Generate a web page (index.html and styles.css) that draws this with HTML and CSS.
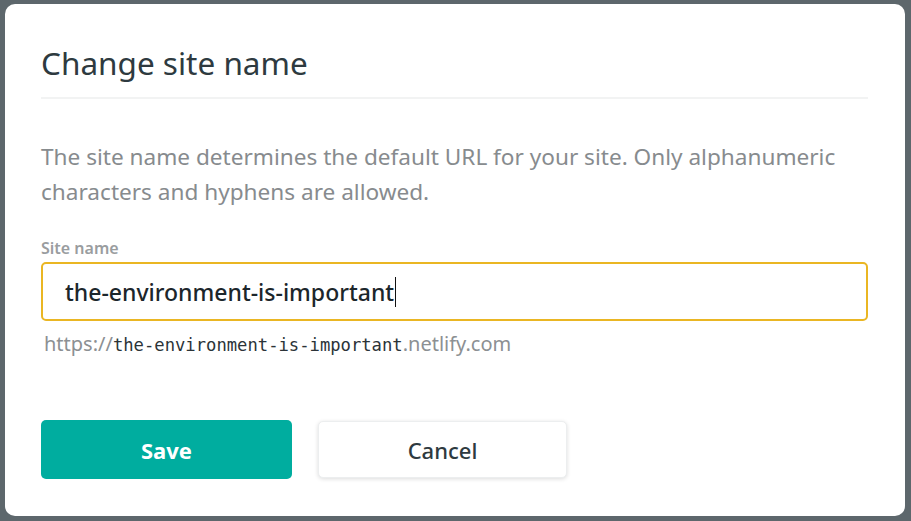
FILE: index.html
```html
<!DOCTYPE html>
<html>
<head>
<meta charset="utf-8">
<link rel="stylesheet" href="styles.css">
</head>
<body>
<div class="modal">
  <h1 class="title">Change site name</h1>
  <div class="divider"></div>
  <p class="desc">The site name determines the default URL for your site. Only alphanumeric characters and hyphens are allowed.</p>
  <label class="label">Site name</label>
  <div class="input"><span class="value">the-environment-is-important</span><span class="caret"></span></div>
  <div class="url">https://<span class="mono">the-environment-is-important</span>.netlify.com</div>
  <div class="actions">
    <button class="btn save">Save</button>
    <button class="btn cancel">Cancel</button>
  </div>
</div>
</body>
</html>
```
FILE: styles.css
```css
html, body { margin: 0; padding: 0; }
body {
  width: 911px; height: 521px;
  background: #5d676c;
  font-family: "Noto Sans", "Open Sans", sans-serif;
  box-sizing: border-box;
  padding: 4px 6px 5px 5px;
}
.modal {
  background: #fff;
  border-radius: 10px;
  height: 512px;
  box-sizing: border-box;
  padding: 37px 37px 0 36px;
}
.title {
  margin: 0;
  font-size: 31.5px;
  font-weight: 400;
  color: #2e3a40;
  line-height: 44px;
}
.divider {
  height: 2px;
  background: #f2f3f3;
  margin-top: 12px;
}
.desc {
  margin: 40px 0 0 0;
  font-size: 22.6px;
  line-height: 35px;
  color: #878b8e;
  max-width: 830px;
}
.label {
  display: block;
  margin-top: 29px;
  font-size: 16px;
  font-weight: 600;
  color: #9a9d9f;
  line-height: 20px;
}
.input {
  margin-top: 4px;
  height: 59px;
  box-sizing: border-box;
  border: 2px solid #eab623;
  border-radius: 5px;
  display: flex;
  align-items: center;
  padding-left: 22px;
}
.value {
  font-size: 23px;
  font-weight: 500;
  color: #1c262b;
}
.caret {
  width: 1px;
  height: 30px;
  background: #111;
  margin-left: 1px;
}
.url {
  margin-top: 9px;
  padding-left: 3px;
  font-size: 20px;
  color: #8c9093;
  line-height: 28px;
}
.mono {
  font-family: "DejaVu Sans Mono", "Liberation Mono", monospace;
  font-size: 17.2px;
  color: #2b3338;
}
.actions {
  display: flex;
  gap: 26px;
  margin-top: 61px;
  align-items: center;
}
.btn {
  font-family: "Noto Sans", "Open Sans", sans-serif;
  font-size: 22px;
  height: 59px;
  border-radius: 5px;
  cursor: pointer;
}
.save {
  width: 251px;
  background: #00ad9f;
  color: #fff;
  border: none;
  font-weight: 700;
}
.cancel {
  width: 249px;
  height: 57px;
  background: #fff;
  color: #2e3a40;
  border: 1px solid #eceeef;
  box-shadow: 0 1px 4px rgba(0,0,0,0.14);
  font-weight: 500;
}
```
